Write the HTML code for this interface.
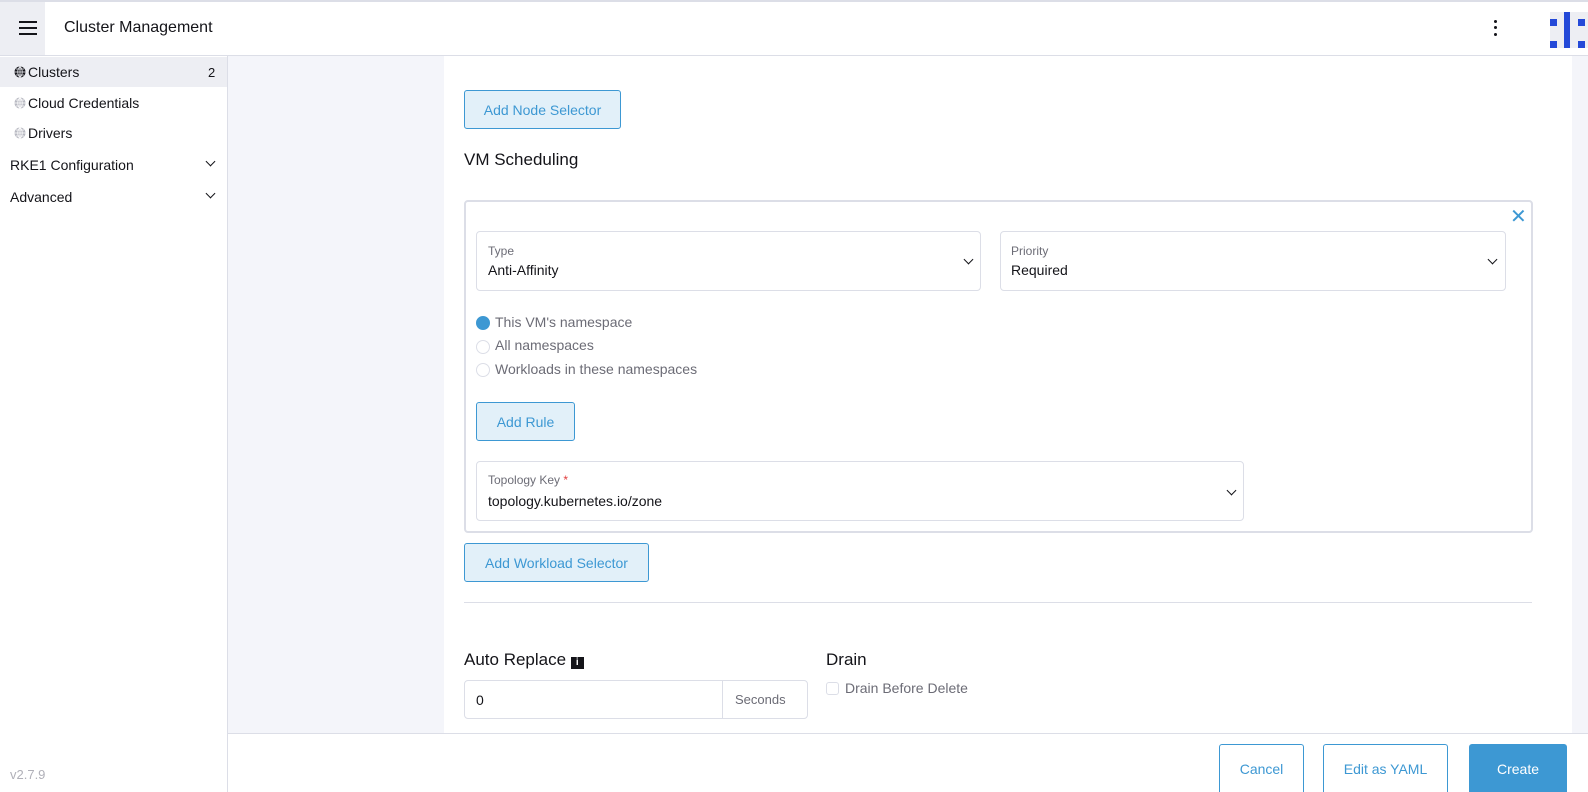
<!DOCTYPE html>
<html><head><meta charset="utf-8"><style>
*{box-sizing:border-box;margin:0;padding:0}
body{width:1588px;height:792px;overflow:hidden;font-family:"Liberation Sans",sans-serif;background:#fff;position:relative;color:#141419}
.abs{position:absolute}
.hdr{left:0;top:0;width:1588px;height:56px;border-top:2px solid #dcdee7;border-bottom:1px solid #dcdee7;background:#fff}
.side{left:0;top:56px;width:228px;height:736px;border-right:1px solid #dcdee7;background:#fff}
.gray{left:228px;top:56px;width:216px;height:687px;background:#f4f5fa}
.gray2{left:1572px;top:56px;width:16px;height:687px;background:#f4f5fa}
.btn{border:1px solid #3d98d3;border-radius:3px;background:#e2f0f9;color:#3d98d3;font-size:14px;display:flex;align-items:center;justify-content:center}
.sel{border:1px solid #dcdee7;border-radius:4px;background:#fff}
.lbl{font-size:12px;color:#6c6c76}
.val{font-size:14px;color:#141419}
.chev{width:8px;height:8px;border-right:2px solid #141419;border-bottom:2px solid #141419;transform:rotate(45deg)}
.radio{width:14px;height:14px;border-radius:50%;border:1px solid #dcdee7}
.rt{font-size:14px;color:#6c6c76}
.fb{border:1px solid #3d98d3;border-radius:3px;background:#fff;color:#3d98d3;font-size:14px;display:flex;align-items:center;justify-content:center}
.glob{display:inline-block;width:12px;height:12px;vertical-align:-1px;margin-right:2px}
</style></head><body>
<div class="abs hdr"></div>
<div class="abs" style="left:0;top:2px;width:45px;height:53px;background:#edeef3"></div>
<div class="abs" style="left:19px;top:21px;width:18px;height:2px;background:#141419;box-shadow:0 6px 0 #141419,0 12px 0 #141419"></div>
<div class="abs" style="left:64px;top:19px;font-size:16px">Cluster Management</div>
<div class="abs" style="left:1494px;top:20px;width:3px;height:3px;border-radius:50%;background:#141419;box-shadow:0 6px 0 #141419,0 13px 0 #141419"></div>
<div class="abs" style="left:1550px;top:12px;width:38px;height:36px;background:#edeef3"></div>
<div class="abs" style="left:1550px;top:19px;width:7px;height:7px;background:#2449d8"></div>
<div class="abs" style="left:1550px;top:41px;width:7px;height:7px;background:#2449d8"></div>
<div class="abs" style="left:1564px;top:12px;width:6px;height:36px;background:#2449d8"></div>
<div class="abs" style="left:1578px;top:19px;width:7px;height:7px;background:#2449d8"></div>
<div class="abs" style="left:1578px;top:41px;width:7px;height:7px;background:#2449d8"></div>

<div class="abs side"></div>
<div class="abs" style="left:0;top:57px;width:227px;height:30px;background:#edeef3"></div>
<div class="abs" style="left:14px;top:64px;font-size:14px"><svg class="glob" viewBox="0 0 12 12"><circle cx="6" cy="6" r="5.5" fill="#141419"/><path d="M0.5 6h11M6 .5v11M2 3h8M2 9h8M6 .5c-3 3-3 8 0 11M6 .5c3 3 3 8 0 11" stroke="#edeef3" stroke-width=".8" fill="none"/></svg>Clusters</div>
<div class="abs" style="left:208px;top:65px;font-size:13px">2</div>
<div class="abs" style="left:14px;top:95px;font-size:14px"><svg class="glob" viewBox="0 0 12 12"><circle cx="6" cy="6" r="5.5" fill="#b8b9c2"/><path d="M0.5 6h11M6 .5v11M2 3h8M2 9h8M6 .5c-3 3-3 8 0 11M6 .5c3 3 3 8 0 11" stroke="#fff" stroke-width=".8" fill="none"/></svg>Cloud Credentials</div>
<div class="abs" style="left:14px;top:125px;font-size:14px"><svg class="glob" viewBox="0 0 12 12"><circle cx="6" cy="6" r="5.5" fill="#b8b9c2"/><path d="M0.5 6h11M6 .5v11M2 3h8M2 9h8M6 .5c-3 3-3 8 0 11M6 .5c3 3 3 8 0 11" stroke="#fff" stroke-width=".8" fill="none"/></svg>Drivers</div>
<div class="abs" style="left:10px;top:157px;font-size:14px">RKE1 Configuration</div>
<div class="abs chev" style="left:207px;top:158px;width:7px;height:7px;border-width:1.5px"></div>
<div class="abs" style="left:10px;top:189px;font-size:14px">Advanced</div>
<div class="abs chev" style="left:207px;top:190px;width:7px;height:7px;border-width:1.5px"></div>
<div class="abs" style="left:10px;top:767px;font-size:13px;color:#b0b0b8">v2.7.9</div>

<div class="abs gray"></div>
<div class="abs gray2"></div>

<div class="abs btn" style="left:464px;top:90px;width:157px;height:39px">Add Node Selector</div>
<div class="abs" style="left:464px;top:150px;font-size:17px">VM Scheduling</div>

<div class="abs" style="left:464px;top:200px;width:1069px;height:333px;border:2px solid #dcdee7;border-radius:4px"></div>
<div class="abs" style="left:1510px;top:204px;font-size:20px;color:#3d98d3">✕</div>

<div class="abs sel" style="left:476px;top:231px;width:505px;height:60px"></div>
<div class="abs lbl" style="left:488px;top:244px">Type</div>
<div class="abs val" style="left:488px;top:262px">Anti-Affinity</div>
<div class="abs chev" style="left:965px;top:256px;width:7px;height:7px;border-width:1.5px"></div>

<div class="abs sel" style="left:1000px;top:231px;width:506px;height:60px"></div>
<div class="abs lbl" style="left:1011px;top:244px">Priority</div>
<div class="abs val" style="left:1011px;top:262px">Required</div>
<div class="abs chev" style="left:1489px;top:256px;width:7px;height:7px;border-width:1.5px"></div>

<div class="abs radio" style="left:476px;top:316px;background:#3d98d3;border-color:#3d98d3"></div>
<div class="abs rt" style="left:495px;top:314px">This VM's namespace</div>
<div class="abs radio" style="left:476px;top:340px"></div>
<div class="abs rt" style="left:495px;top:337px">All namespaces</div>
<div class="abs radio" style="left:476px;top:363px"></div>
<div class="abs rt" style="left:495px;top:361px">Workloads in these namespaces</div>

<div class="abs btn" style="left:476px;top:402px;width:99px;height:39px">Add Rule</div>

<div class="abs sel" style="left:476px;top:461px;width:768px;height:60px"></div>
<div class="abs lbl" style="left:488px;top:473px">Topology Key <span style="color:#e03c3c">*</span></div>
<div class="abs val" style="left:488px;top:493px">topology.kubernetes.io/zone</div>
<div class="abs chev" style="left:1228px;top:487px;width:7px;height:7px;border-width:1.5px"></div>

<div class="abs btn" style="left:464px;top:543px;width:185px;height:39px">Add Workload Selector</div>
<div class="abs" style="left:464px;top:602px;width:1068px;height:1px;background:#dcdee7"></div>

<div class="abs" style="left:464px;top:650px;font-size:17px">Auto Replace <span style="display:inline-block;width:13px;height:12px;background:#141419;color:#fff;font-size:10px;font-weight:bold;text-align:center;line-height:12px;vertical-align:0">i</span></div>
<div class="abs sel" style="left:464px;top:680px;width:344px;height:39px"></div>
<div class="abs" style="left:722px;top:680px;width:1px;height:39px;background:#dcdee7"></div>
<div class="abs val" style="left:476px;top:692px">0</div>
<div class="abs" style="left:735px;top:692px;font-size:13px;color:#6c6c76">Seconds</div>
<div class="abs" style="left:826px;top:650px;font-size:17px">Drain</div>
<div class="abs" style="left:826px;top:682px;width:13px;height:13px;border:1px solid #dcdee7;border-radius:3px"></div>
<div class="abs rt" style="left:845px;top:680px">Drain Before Delete</div>

<div class="abs" style="left:228px;top:733px;width:1360px;height:59px;background:#fff;border-top:1px solid #dcdee7"></div>
<div class="abs fb" style="left:1219px;top:744px;width:85px;height:48px;border-bottom:none;border-radius:3px 3px 0 0">Cancel</div>
<div class="abs fb" style="left:1323px;top:744px;width:125px;height:48px;border-bottom:none;border-radius:3px 3px 0 0">Edit as YAML</div>
<div class="abs fb" style="left:1469px;top:744px;width:98px;height:48px;background:#3d98d3;color:#fff;border-bottom:none;border-radius:3px 3px 0 0">Create</div>
</body></html>
